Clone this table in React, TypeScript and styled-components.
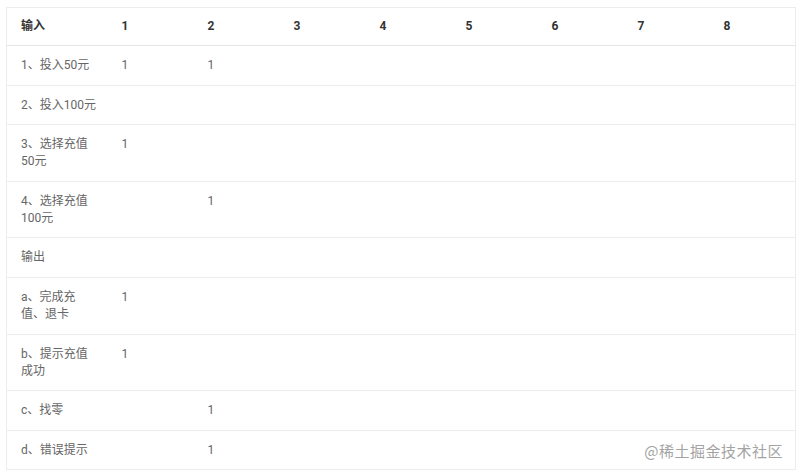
import React from "react";
import styled, { createGlobalStyle } from "styled-components";

const Global = createGlobalStyle`
  html, body {
    margin: 0;
    padding: 0;
    background: #ffffff;
    font-family: Roboto, "Noto Sans CJK SC", sans-serif;
  }
`;

const Page = styled.div`
  position: relative;
  width: 800px;
  height: 475px;
  padding: 7px 6px;
  box-sizing: border-box;
`;

const Table = styled.table`
  width: 790px;
  table-layout: fixed;
  border-collapse: collapse;
  border: 1px solid #ececec;
  font-size: 12px;
  line-height: 17px;
`;

const HeadCell = styled.th`
  text-align: left;
  font-weight: 700;
  color: #333333;
  padding: 10px 10px 10px 14px;
  border-bottom: 1px solid #e6e6e6;
`;

const Cell = styled.td`
  text-align: left;
  color: #666666;
  padding: 11px 10px 10.6px 14px;
  border-bottom: 1px solid #ececec;
  vertical-align: top;
  line-break: strict;
`;

const Watermark = styled.div`
  position: absolute;
  right: 17px;
  bottom: 14px;
  font-size: 15px;
  color: #a3a3a3;
  letter-spacing: 0.5px;
  font-family: "Noto Sans CJK SC", sans-serif;
  text-shadow: 0 0 2px #fff, 0 0 2px #fff;
`;

const cols = ["1", "2", "3", "4", "5", "6", "7", "8"];

const rows: { label: string; marks: number[] }[] = [
  { label: "1、投入50元", marks: [0, 1] },
  { label: "2、投入100元", marks: [] },
  { label: "3、选择充值50元", marks: [0] },
  { label: "4、选择充值100元", marks: [1] },
  { label: "输出", marks: [] },
  { label: "a、完成充值、退卡", marks: [0] },
  { label: "b、提示充值成功", marks: [0] },
  { label: "c、找零", marks: [1] },
  { label: "d、错误提示", marks: [1] },
];

export default function App() {
  return (
    <Page>
      <Global />
      <Table>
        <colgroup>
          <col style={{ width: 101 }} />
          {cols.map((c) => (
            <col key={c} style={{ width: 86 }} />
          ))}
        </colgroup>
        <thead>
          <tr>
            <HeadCell>输入</HeadCell>
            {cols.map((c) => (
              <HeadCell key={c}>{c}</HeadCell>
            ))}
          </tr>
        </thead>
        <tbody>
          {rows.map((r) => (
            <tr key={r.label}>
              <Cell>{r.label}</Cell>
              {cols.map((c, i) => (
                <Cell key={c}>{r.marks.includes(i) ? "1" : ""}</Cell>
              ))}
            </tr>
          ))}
        </tbody>
      </Table>
      <Watermark>@稀土掘金技术社区</Watermark>
    </Page>
  );
}
